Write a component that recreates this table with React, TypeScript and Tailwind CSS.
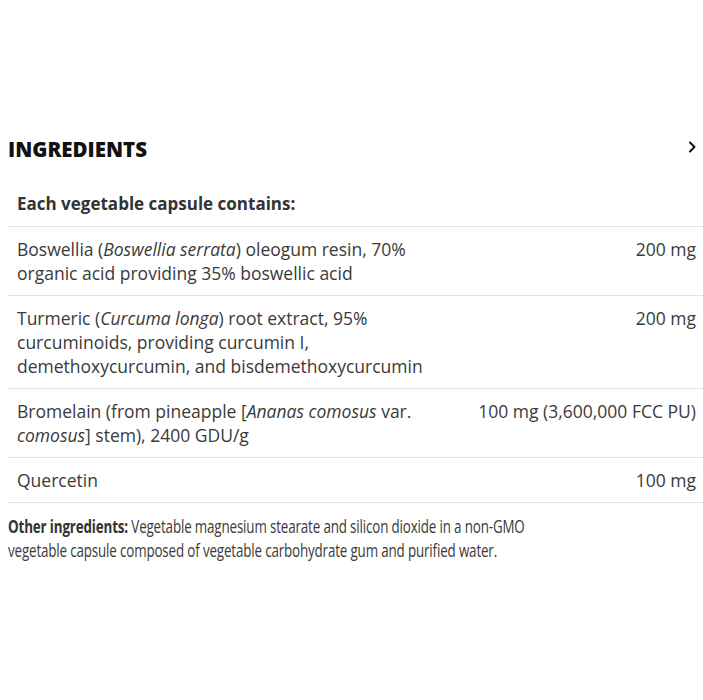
import React from 'react'

interface Row {
  name: React.ReactNode
  amount: string
}

const rows: Row[] = [
  {
    name: (
      <>
        Boswellia (<i>Boswellia serrata</i>) oleogum resin, 70% organic acid providing 35% boswellic acid
      </>
    ),
    amount: '200 mg',
  },
  {
    name: (
      <>
        Turmeric (<i>Curcuma longa</i>) root extract, 95% curcuminoids, providing curcumin I,
        demethoxycurcumin, and bisdemethoxycurcumin
      </>
    ),
    amount: '200 mg',
  },
  {
    name: (
      <>
        Bromelain (from pineapple [<i>Ananas comosus</i> var. <i>comosus</i>] stem), 2400 GDU/g
      </>
    ),
    amount: '100 mg (3,600,000 FCC PU)',
  },
  {
    name: 'Quercetin',
    amount: '100 mg',
  },
]

function ChevronRight() {
  return (
    <svg width="10" height="12" viewBox="0 0 10 12" fill="none" className="-mt-[5px]">
      <path d="M3 1.5 L7.5 6 L3 10.5" stroke="#111" strokeWidth="2" strokeLinecap="round" strokeLinejoin="round" />
    </svg>
  )
}

export default function App() {
  return (
    <div className="w-[703px] h-[700px] bg-white text-[#3a3a3a] font-['Open_Sans',sans-serif] overflow-hidden">
      <div className="pt-[134px] pl-[8px] pr-[6px] flex items-center justify-between">
        <h2 className="text-[20.5px] font-extrabold tracking-[0px] text-[#111] leading-[30px]">INGREDIENTS</h2>
        <ChevronRight />
      </div>

      <div className="mt-[28px] pl-[8px]">
        <div className="pl-[9px] pb-[10px] text-[17px] font-bold text-[#333] leading-[24px]">
          Each vegetable capsule contains:
        </div>
        <div className="border-t border-[#e4e4e4]">
          {rows.map((row, i) => (
            <div key={i} className="flex justify-between gap-4 pl-[9px] pr-[7px] py-[10px] border-b border-[#e4e4e4] text-[17.5px] leading-[24px]">
              <div className="w-[414px] shrink-0">{row.name}</div>
              <div className="text-right whitespace-nowrap">{row.amount}</div>
            </div>
          ))}
        </div>
        <p className="pt-[11px] w-[706px] text-[17.5px] leading-[24px] tracking-[-0.2px] scale-x-[0.765] origin-left">
          <b className="font-bold text-[#333]">Other ingredients:</b> Vegetable magnesium stearate and silicon dioxide
          in a non-GMO vegetable capsule composed of vegetable carbohydrate gum and purified water.
        </p>
      </div>
    </div>
  )
}
